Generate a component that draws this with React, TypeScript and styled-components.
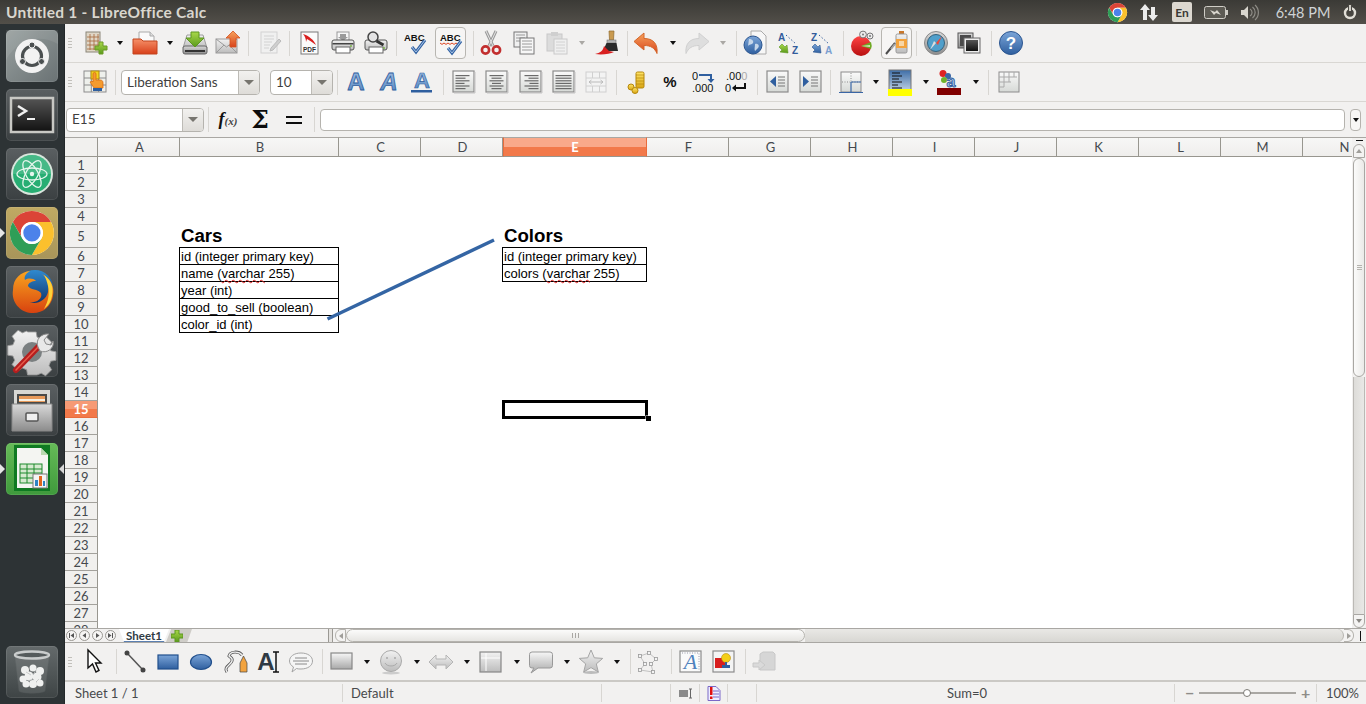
import React, { ReactNode } from "react";
import styled, { createGlobalStyle } from "styled-components";

const UI = `Lato, "Noto Sans", sans-serif`;

const Global = createGlobalStyle`
  html, body { margin: 0; padding: 0; background: #f2f1f0; overflow: hidden; }
  * { box-sizing: border-box; }
`;

const Page = styled.div`
  width: 1366px; height: 704px; display: flex; flex-direction: column; overflow: hidden;
  font-family: ${UI}; color: #3c3c3c; position: relative;
`;
const DefsSvg = styled.svg`position: absolute; width: 0; height: 0;`;

/* ---------- top panel ---------- */
const TopPanel = styled.header`
  height: 24px; flex: none; display: flex; align-items: center;
  background: linear-gradient(#3b3a36, #524f49); color: #d8d5cd;
`;
const WinTitle = styled.div`
  margin-left: 6px; font: bold 15.5px ${UI}; letter-spacing: 0.25px; white-space: nowrap; color: #d9d6ce;
`;
const Tray = styled.div`margin-left: auto; display: flex; align-items: center; height: 24px;`;
const TraySlot = styled.div<{ $w: number; $gap: number }>`
  width: ${p => p.$w}px; margin-left: ${p => p.$gap}px; flex: none;
  display: flex; align-items: center; justify-content: center;
`;
const LangBadge = styled.div`
  width: 20px; height: 20px; border-radius: 2px; background: #dcd8d0; color: #3a3935;
  font: bold 12px ${UI}; display: flex; align-items: center; justify-content: center;
`;
const Clock = styled.div`font-size: 14.5px; color: #cfd3d6; white-space: nowrap;`;

/* ---------- launcher ---------- */
const Body = styled.div`flex: 1; display: flex; min-height: 0;`;
const Launcher = styled.nav`
  width: 65px; flex: none; background: #2d3335; display: flex; flex-direction: column;
  align-items: center; gap: 7px; padding: 6px 1px 6px 0; border-right: 1px solid #23282a;
`;
const Tile = styled.div<{ $bg: string; $last?: boolean }>`
  width: 52px; height: 52px; border-radius: 5px; background: ${p => p.$bg}; position: relative; flex: none;
  margin-top: ${p => (p.$last ? "auto" : "0")};
  box-shadow: inset 0 0 0 1px rgba(255,255,255,.09);
  svg { display: block; }
`;
const PipLeft = styled.span`
  position: absolute; left: -6px; top: 21px; width: 0; height: 0;
  border-left: 5px solid #e6e6e6; border-top: 5px solid transparent; border-bottom: 5px solid transparent;
`;
const PipRight = styled.span`
  position: absolute; right: -6px; top: 21px; width: 0; height: 0;
  border-right: 5px solid #d8d8d8; border-top: 5px solid transparent; border-bottom: 5px solid transparent;
`;

/* ---------- toolbars ---------- */
const Main = styled.main`flex: 1; min-width: 0; display: flex; flex-direction: column; background: #f2f1f0;`;
const Toolbar = styled.div<{ $h: number; $line?: boolean }>`
  height: ${p => p.$h}px; flex: none; display: flex; align-items: center;
  border-bottom: ${p => (p.$line ? "1px solid #d9d7d3" : "0")};
`;
const Slot = styled.div<{ $gap: number; $w: number; $on?: boolean }>`
  margin-left: ${p => p.$gap}px; width: ${p => p.$w}px; flex: none; position: relative;
  display: flex; align-items: center; justify-content: center;
  svg { overflow: visible; display: block; }
`;
const Toggled = styled.div`
  width: 31px; height: 32px; border: 1px solid #b8b6b1; border-radius: 4px; background: #f6f5f4;
  display: flex; align-items: center; justify-content: center; flex: none;
`;
const Sep = styled.div`width: 1px; height: 25px; background: #d8d6d2;`;
const Grip = styled.div`
  width: 4px; height: 10px;
  background: repeating-linear-gradient(#c2c0bb 0 1px, transparent 1px 3px);
`;
const Drop = styled.div<{ $off?: boolean }>`
  width: 0; height: 0; border-left: 3.5px solid transparent; border-right: 3.5px solid transparent;
  border-top: 4px solid ${p => (p.$off ? "#aaa8a4" : "#111")};
`;
const Combo = styled.div<{ $h: number }>`
  width: 100%; height: ${p => p.$h}px; display: flex; background: #fff; border: 1px solid #b5b3ae; border-radius: 4px;
  overflow: hidden;
`;
const ComboText = styled.div`
  flex: 1; padding: 1px 0 0 5px; font-size: 13.5px; line-height: 1; display: flex; align-items: center; color: #3f3f3f; white-space: nowrap;
`;
const ComboBtn = styled.div<{ $w: number }>`
  width: ${p => p.$w}px; flex: none; border-left: 1px solid #bdbbb6;
  background: linear-gradient(#f2f1ef, #dedcd8); display: flex; align-items: center; justify-content: center;
  span { width: 0; height: 0; border-left: 5px solid transparent; border-right: 5px solid transparent; border-top: 5px solid #77756f; }
`;
const FormulaInput = styled.div`
  width: 100%; height: 22px; background: #fff; border: 1px solid #b5b3ae; border-radius: 4px;
`;
const FormulaDrop = styled.div`
  width: 11px; height: 22px; border: 1px solid #b5b3ae; border-radius: 4px; background: #f8f7f6;
  display: flex; align-items: center; justify-content: center;
`;
const FxGlyph = styled.div`
  font: italic bold 18px "Liberation Serif", serif; color: #111; white-space: nowrap;
  small { font-size: 11px; color: #444; }
`;
const SigmaGlyph = styled.div`font: bold 25px "DejaVu Serif", serif; color: #0c0c0c; line-height: 1;`;
const EqualGlyph = styled.div`
  width: 16px; height: 8px; border-top: 2.5px solid #0c0c0c; border-bottom: 2.5px solid #0c0c0c;
`;

/* ---------- sheet ---------- */
const SheetArea = styled.section`flex: 1; min-height: 0; display: flex; position: relative; background: #fff;`;
const GridView = styled.div`width: 1287px; flex: none; overflow: hidden;`;
const COLS = [82, 159, 82, 82, 144, 82, 82, 82, 82, 82, 82, 82, 82, 82];
const ROWH = Array.from({ length: 28 }, (_, i) => (i === 4 ? 23 : 17));
const Grid = styled.div`
  display: grid;
  grid-template-columns: 33px ${COLS.map(c => c + "px").join(" ")};
  grid-template-rows: 20px ${ROWH.map(c => c + "px").join(" ")};
  width: ${33 + COLS.reduce((a, b) => a + b, 0)}px;
`;
const Corner = styled.div`
  background: #f1f0ee; border-top: 1px solid #a9a7a3; border-bottom: 1px solid #98968f; border-right: 1px solid #98968f;
`;
const ColHead = styled.div<{ $sel?: boolean }>`
  border-top: 1px solid #a9a7a3; border-bottom: 1px solid #98968f; border-right: 1px solid ${p => (p.$sel ? "#e96c3c" : "#98968f")};
  border-left: ${p => (p.$sel ? "1px solid #e96c3c" : "0")};
  padding-left: ${p => (p.$sel ? 0 : 2)}px;
  background: ${p => p.$sel ? "linear-gradient(#f9a98a 0 9px, #f2794a 9px)" : "linear-gradient(#f7f7f6, #efeeec)"};
  color: ${p => (p.$sel ? "#fff" : "#45494e")}; font-weight: ${p => (p.$sel ? 700 : 400)};
  font-size: 13px; display: flex; align-items: center; justify-content: center;
`;
const RowHead = styled.div<{ $sel?: boolean }>`
  border-bottom: 1px solid ${p => (p.$sel ? "#e96c3c" : "#a3a19c")}; border-right: 1px solid #98968f;
  background: ${p => p.$sel ? "linear-gradient(#f69a75 0 8px, #f2794a 8px)" : "#f1f0ee"};
  color: ${p => (p.$sel ? "#fff" : "#45494e")}; font-weight: ${p => (p.$sel ? 700 : 400)};
  font-size: 13px; display: flex; align-items: center; justify-content: center;
`;
const Cell = styled.div<{ $table?: boolean; $first?: boolean; $sel?: boolean; $title?: boolean }>`
  font: ${p => (p.$title ? "bold 18.67px" : "13px")} "Liberation Sans", sans-serif;
  color: #000; padding-left: 1px; white-space: nowrap; position: relative;
  display: flex; align-items: flex-end; line-height: ${p => (p.$title ? "22px" : "16px")};
  padding-bottom: ${p => (p.$title ? 1 : 0)}px;
  box-shadow: ${p => {
    if (p.$sel) return "inset 0 0 0 2px #000, 0 0 0 1px #000";
    if (p.$table) {
      const s = ["inset 0 -1px 0 #000", "inset -1px 0 0 #000", "-1px 0 0 #000"];
      if (p.$first) s.push("0 -1px 0 #000", "-1px -1px 0 #000");
      return s.join(",");
    }
    return "none";
  }};
  u { text-decoration: underline wavy #d22 1px; text-underline-offset: 1px; text-decoration-skip-ink: none; }
`;
const FillHandle = styled.span`
  position: absolute; right: -4px; bottom: -3px; width: 5px; height: 5px; background: #000; box-shadow: 0 0 0 0.5px #fff;
`;
const LinkLine = styled.svg`position: absolute; left: 0; top: 0; width: 1301px; height: 491px; pointer-events: none;`;

const VScroll = styled.div`
  width: 14px; flex: none; background: #f2f1f0; display: flex; flex-direction: column; align-items: center;
  border-top: 1px solid #a9a7a3; position: relative;
`;
const SplitDash = styled.div`width: 7px; height: 1px; background: #111; margin: 2px 0 3px;`;
const VBtn = styled.div`
  width: 12px; height: 14px; flex: none; background: #f4f3f2; border: 1px solid #a9a7a3; border-radius: 6px 6px 0 0;
  display: flex; align-items: center; justify-content: center;
  span { width: 0; height: 0; border-left: 3px solid transparent; border-right: 3px solid transparent; border-bottom: 4px solid #a09e9a; }
`;
const VThumb = styled.div`
  width: 12px; height: 219px; flex: none; background: linear-gradient(90deg, #fbfbfa, #ebeae8);
  border: 1px solid #a9a7a3; border-radius: 6px;
  display: flex; align-items: center; justify-content: center;
`;
const VTrack = styled.div`flex: 1; width: 12px; background: linear-gradient(90deg,#dddcd9,#e9e8e6); border-left: 1px solid #bbb9b5; border-right: 1px solid #bbb9b5;`;
const VBtnDown = styled(VBtn)`
  border-radius: 0 0 6px 6px;
  span { border-bottom: 0; border-top: 4px solid #8a8884; }
`;
const GripLines = styled.div`
  width: 5px; height: 5px; background: repeating-linear-gradient(#b5b3ae 0 1px, transparent 1px 2px);
`;

/* ---------- tab bar ---------- */
const TabBar = styled.div`
  height: 15px; flex: none; display: flex; align-items: stretch; background: #f2f1f0;
  border-top: 1px solid #a9a7a3; border-bottom: 1px solid #a9a7a3; position: relative;
`;
const NavGroup = styled.div`display: flex; align-items: center; gap: 2px; padding-left: 1px; margin-right: 1px; width: 53px;`;
const NavBtn = styled.div`
  width: 11px; height: 11px; border-radius: 50%; border: 1px solid #9a9893; background: #f6f5f4; flex: none;
  display: flex; align-items: center; justify-content: center; font-size: 0;
  svg { display: block; }
`;
const SheetTab = styled.div`
  width: 50px; font: bold 11.5px ${UI}; color: #2f3a44; display: flex; align-items: center; justify-content: center;
  background: #fff; clip-path: polygon(0 0, 100% 0, 90% 100%, 10% 100%);
  border-bottom: 1px solid #5b7fb0; margin-left: 0;
`;
const AddTab = styled.div`
  width: 26px; margin-left: -3px; padding-right: 4px; background: #cfcdc8; clip-path: polygon(20% 0, 100% 0, 82% 100%, 0 100%);
  display: flex; align-items: center; justify-content: center;
`;
const TabFill = styled.div`width: 137px; background: #f2f1f0; border-right: 1px solid #9a9893;`;
const TabSplit = styled.div`width: 4px; background: #e4e2df; border-right: 1px solid #9a9893;`;
const HScroll = styled.div`flex: 1; display: flex; align-items: stretch; min-width: 0;`;
const HBtn = styled.div`
  width: 11px; margin-left: 2px; flex: none; border: 1px solid #b5b3ae; border-radius: 6px 0 0 6px; background: #f4f3f2;
  display: flex; align-items: center; justify-content: center;
  span { width: 0; height: 0; border-top: 3px solid transparent; border-bottom: 3px solid transparent; border-right: 4px solid #a09e9a; }
`;
const HThumb = styled.div`
  width: 459px; flex: none; border: 1px solid #b5b3ae; border-radius: 7px;
  background: linear-gradient(#fbfbfa, #e6e5e2); display: flex; align-items: center; justify-content: center;
`;
const HGrip = styled.div`
  width: 7px; height: 5px; background: repeating-linear-gradient(90deg, #a9a7a3 0 1px, transparent 1px 3px);
`;
const HTrack = styled.div`
  flex: 1; background: linear-gradient(#e9e8e5, #d8d7d3); border-radius: 0 7px 7px 0; border-right: 1px solid #b5b3ae;
`;
const HBtnRight = styled(HBtn)`
  margin-left: 0; width: 10px; border-radius: 0 6px 6px 0; border-left: 0;
  span { border-right: 0; border-left: 4px solid #a09e9a; }
`;
const HEnd = styled.div`
  width: 12px; flex: none; display: flex; justify-content: center;
  span { width: 1px; height: 10px; margin-top: 2px; background: #111; }
`;

/* ---------- status ---------- */
const DrawBar = styled(Toolbar)`border-bottom: 2px solid #cbc9c5;`;
const StatusBar = styled.footer`height: 22px; flex: none; display: flex; align-items: center; font-size: 13px; color: #47494b;`;
const StatusCell = styled.div<{ $w?: number; $center?: boolean; $edge?: boolean; $pad?: number }>`
  width: ${p => (p.$w ? `${p.$w}px` : "auto")}; flex: ${p => (p.$w ? "none" : 1)}; height: 18px;
  display: flex; align-items: center; white-space: nowrap;
  justify-content: ${p => (p.$center ? "center" : "flex-start")};
  padding-left: ${p => p.$pad ?? 0}px;
  border-right: ${p => (p.$edge ? "1px solid #d8d6d2" : "0")};
`;
const ZoomPart = styled.div`display: flex; align-items: center; padding-left: 10px; gap: 5px;`;
const ZoomSign = styled.div`font-weight: 700; font-size: 16px; line-height: 16px; width: 9px; text-align: center; color: #8e8c88;`;
const ZoomTrack = styled.div`
  width: 97px; height: 2px; background: #a9a7a3; position: relative;
`;
const ZoomKnob = styled.div`
  position: absolute; left: 44px; top: -3px; width: 8px; height: 8px; border-radius: 50%;
  background: #fff; border: 1px solid #7d7b77;
`;

/* ---------- svg art ---------- */
const T = (p: any) => <text fontFamily="Liberation Sans, sans-serif" {...p} />;

const Defs = () => (
  <DefsSvg aria-hidden="true">
    <defs>
      {[
        ["gBlue", "#7ba5d8", "#2f5f9f"], ["gBlueL", "#a8c4e6", "#4f81bd"], ["gGray", "#f7f7f7", "#a8a8a8"],
        ["gFrame", "#fafafa", "#d6d9d6"], ["gOrange", "#f7a35c", "#d8431c"], ["gFolder", "#f6916a", "#d8401a"],
        ["gRed", "#f44", "#b81010"], ["gGreen", "#a9d84a", "#5a9a1c"], ["gYellow", "#ffe566", "#d9a514"],
        ["gDark", "#555", "#111"], ["gShade", "#f2f2f2", "#bcbcbc"], ["gDisabled", "#f2f2f2", "#d2d2d2"],
        ["gMetal", "#d9d9d9", "#8c8c8c"], ["gSheen", "#3e6ea8", "#b9cce0"], ["gFox", "#f9a51f", "#d8420f"], ["gGlobe", "#2f8ad0", "#0e2f66"],
      ].map(([id, a, b]) => (
        <linearGradient id={id} key={id} x1="0" y1="0" x2="0" y2="1">
          <stop offset="0" stopColor={a} /><stop offset="1" stopColor={b} />
        </linearGradient>
      ))}
    </defs>
  </DefsSvg>
);

const chrome = (
  <>
    <circle cx="24" cy="24" r="22" fill="#fff" />
    <path d="M4.95 13A22 22 0 0 1 43.05 13H24A11 11 0 0 0 14.47 29.5Z" fill="#db4437" />
    <path d="M43.05 13A22 22 0 0 1 24 46L33.53 29.5A11 11 0 0 0 24 13Z" fill="#fbc02d" />
    <path d="M24 46A22 22 0 0 1 4.95 13L14.47 29.5A11 11 0 0 0 33.53 29.5Z" fill="#2f9e57" />
    <circle cx="24" cy="24" r="11" fill="#fff" />
    <circle cx="24" cy="24" r="8.6" fill="#4c82ea" />
  </>
);

const Align = ({ k }: { k: string }) => {
  const w = [14, 10, 14, 9, 14, 10];
  return (
    <>
      <rect x="1" y="1" width="21" height="21" fill="url(#gFrame)" stroke="#8c8c8c" strokeWidth="1.2" />
      <path d="M2 23h21V2" stroke="#c4c4c4" fill="none" />
      {w.map((v, i) => {
        const len = k === "j" ? 16 : v;
        const x = k === "r" ? 19.5 - len : k === "c" ? 11.5 - len / 2 : 3.5;
        return <rect key={i} x={x} y={5 + i * 2.6} width={len} height="1.2" fill="#6a6a6a" />;
      })}
    </>
  );
};
const Indent = ({ right }: { right?: boolean }) => (
  <>
    <rect x="1" y="1" width="21" height="21" fill="url(#gFrame)" stroke="#8c8c8c" strokeWidth="1.2" />
    <path d={right ? "M4 6l6 5.5-6 5.5z" : "M10 6l-6 5.5 6 5.5z"} fill="#2f5f9f" />
    <path d="M12 7h7M12 10h7M12 13h7M12 16h7" stroke="#777" />
  </>
);

const icons: Record<string, ReactNode> = {
  new: <>
    <rect x="3" y="1" width="14" height="20" fill="#dfd6c6" stroke="#8a8678" />
    <path d="M7 3v16M11 3v16M15 3v16M4 6h12M4 10h12M4 14h12M4 18h12" stroke="#a5673a" strokeWidth=".8" />
    <path d="M16 11h4v4h4v4h-4v4h-4v-4h-4v-4h4z" fill="url(#gGreen)" stroke="#6b9a24" />
  </>,
  open: <>
    <path d="M6 1h11l4 4v9H6z" fill="#fafafa" stroke="#aaa" />
    <path d="M17 1v4h4" fill="#ddd" stroke="#aaa" />
    <path d="M0 8h8l2 2h14v13H0z" fill="url(#gFolder)" stroke="#c2441e" />
  </>,
  save: <>
    <path d="M4 4h16l4 13H0z" fill="url(#gShade)" stroke="#9c9c9c" />
    <rect x="0" y="15" width="24" height="8" rx="2" fill="url(#gMetal)" stroke="#666" />
    <rect x="2" y="19" width="20" height="2" fill="#333" />
    <path d="M8 1h8v6h5l-9 9-9-9h5z" fill="url(#gGreen)" stroke="#5c9620" />
  </>,
  mail: <>
    <rect x="0" y="8" width="21" height="14" fill="url(#gShade)" stroke="#9a9a9a" />
    <path d="M0 8l10.5 8L21 8M0 22l8-8M21 22l-8-8" stroke="#9a9a9a" fill="none" />
    <path d="M17 0l7 7h-4v9h-6V7h-4z" fill="url(#gOrange)" stroke="#d4501f" strokeWidth=".8" />
  </>,
  edit: <>
    <rect x="4" y="1" width="16" height="21" fill="#f0f0f0" stroke="#d2d2d2" />
    <path d="M7 5h10M7 8h10M7 11h8M7 14h6M7 17h5" stroke="#d2d2d2" />
    <path d="M22 8l2 2-8 9-3 1 1-3z" fill="#cfcfcf" stroke="#bbb" />
  </>,
  pdf: <>
    <rect x="3" y="1" width="17" height="22" fill="#fbfbfb" stroke="#7a7a7a" />
    <path d="M5 3C11 5 16 9 18 14 14 11 11 9 9 8L8 11C8 8 7 5 5 3z" fill="#d81e1e" />
    <T x="11.5" y="21" fontSize="6.5" fontWeight="bold" textAnchor="middle" fill="#333">PDF</T>
  </>,
  print: <>
    <rect x="6" y="1" width="12" height="10" fill="#f6f6f6" stroke="#999" />
    <path d="M9 3h6v3h2l-5 4-5-4h2z" fill="#9a9a9a" />
    <rect x="1" y="9" width="22" height="10" rx="2" fill="url(#gShade)" stroke="#555" />
    <rect x="5" y="16" width="14" height="6" fill="#fff" stroke="#666" />
    <rect x="1.5" y="12" width="21" height="1.5" fill="#444" />
    <circle cx="20" cy="15" r="1" fill="#7ab648" />
  </>,
  preview: <>
    <rect x="1" y="9" width="22" height="10" rx="2" fill="url(#gShade)" stroke="#555" />
    <rect x="5" y="16" width="14" height="6" fill="#fff" stroke="#666" />
    <circle cx="20" cy="17" r="1" fill="#7ab648" />
    <circle cx="9" cy="6" r="5" fill="#e4e4e4" stroke="#444" strokeWidth="1.5" />
    <path d="M12.5 10l7 4" stroke="#333" strokeWidth="3" />
  </>,
  spell: <>
    <T x="1" y="10" fontSize="9.5" fontWeight="bold" fill="#111">ABC</T>
    <path d="M9 16l4 5 9-12" fill="none" stroke="#3565a5" strokeWidth="3" />
    <path d="M9 16l4 5 9-12" fill="none" stroke="#a9c4e6" strokeWidth="1" />
  </>,
  autospell: <>
    <T x="1" y="10" fontSize="9.5" fontWeight="bold" fill="#111">ABC</T>
    <path d="M1 12l2 1.4 2-1.4 2 1.4 2-1.4 2 1.4 2-1.4 2 1.4 2-1.4 2 1.4" fill="none" stroke="#d42" />
    <path d="M9 17l4 5 9-12" fill="none" stroke="#3565a5" strokeWidth="3" />
    <path d="M9 17l4 5 9-12" fill="none" stroke="#a9c4e6" strokeWidth="1" />
  </>,
  cut: <>
    <path d="M7 0l7 15M17 0L10 15" stroke="#9a9a9a" strokeWidth="3" fill="none" />
    <path d="M7 0l7 15M17 0L10 15" stroke="#e4e4e4" strokeWidth="1" fill="none" />
    <circle cx="6.5" cy="19" r="3.6" fill="none" stroke="#c22f2f" strokeWidth="2.6" />
    <circle cx="17.5" cy="19" r="3.6" fill="none" stroke="#c22f2f" strokeWidth="2.6" />
  </>,
  copy: <>
    <rect x="2" y="1" width="13" height="15" fill="#f0f0f0" stroke="#777" />
    <path d="M4 4h9M4 7h9M4 10h9" stroke="#999" />
    <rect x="8" y="7" width="14" height="16" fill="#f7f7f7" stroke="#777" />
    <path d="M10 10h10M10 13h10M10 16h10M10 19h10" stroke="#9a9a9a" />
  </>,
  paste: <>
    <rect x="2" y="3" width="15" height="17" fill="#dcdcdc" stroke="#c8c8c8" />
    <rect x="6" y="1" width="7" height="4" fill="#cfcfcf" />
    <rect x="9" y="8" width="13" height="15" fill="#efefef" stroke="#cacaca" />
    <path d="M11 11h9M11 14h9M11 17h9M11 20h9" stroke="#d2d2d2" />
  </>,
  brush: <>
    <path d="M14 0h5l-.5 9h-4z" fill="#c99a50" stroke="#8f6a2e" strokeWidth=".7" />
    <rect x="12" y="9" width="9" height="3" fill="#b5b5b5" stroke="#777" strokeWidth=".6" />
    <path d="M11.5 12h10l1.5 8H8z" fill="#2a2a2a" />
    <path d="M0 23C5 22 8 20 9 15l5 5 5 1c-4 2-12 3-19 2z" fill="#d82020" />
  </>,
  undo: <>
    <path d="M0 10.5L10 2v5.5c9 0 14 5 13 15-2.500-5.500-6-8-13-8V19z" fill="url(#gOrange)" stroke="#d3672a" />
  </>,
  redo: <>
    <path d="M24 10.5L14 2v5.5c-9 0-14 5-13 15 2.500-5.500 6-8 13-8V19z" fill="#dedede" stroke="#d0d0d0" />
  </>,
  link: <>
    <path d="M8 0h10l5 5v18H8z" fill="#f7f7f7" stroke="#aaa" />
    <circle cx="10" cy="14" r="9" fill="url(#gBlue)" stroke="#2c5690" />
    <path d="M6 8c3 0 5 2 4 4s-4 1-5 3M12 13c3-1 5 2 3 4l-3 3c-1-2 0-4 0-7z" fill="#c6d7ea" />
  </>,
  az: <>
    <T x="1" y="10" fontSize="10" fontWeight="bold" fill="#335c9c">A</T>
    <T x="15" y="23" fontSize="10" fontWeight="bold" fill="#335c9c">Z</T>
    <path d="M9 4l10 9" stroke="#335c9c" strokeDasharray="1.500 2" />
    <path d="M2 13l3 3 2-2 1 8-8-1 2-2-3-3z" transform="translate(3 0)" fill="url(#gGreen)" stroke="#5c9620" strokeWidth=".6" />
  </>,
  za: <>
    <T x="1" y="10" fontSize="10" fontWeight="bold" fill="#335c9c">Z</T>
    <T x="15" y="23" fontSize="10" fontWeight="bold" fill="#7a9fd0">A</T>
    <path d="M9 4l10 9" stroke="#335c9c" strokeDasharray="1.500 2" />
    <path d="M2 13l3 3 2-2 1 8-8-1 2-2-3-3z" transform="translate(3 0)" fill="url(#gBlue)" stroke="#2c5690" strokeWidth=".6" />
  </>,
  chart: <>
    <circle cx="11" cy="15" r="10" fill="url(#gRed)" />
    <path d="M11 15l10-4a10 10 0 0 1 0 7z" fill="#6ea922" />
    <path d="M11 15l9-1v2z" fill="#fff" opacity=".7" />
    <circle cx="13" cy="3.500" r="3.400" fill="#ececec" stroke="#777" />
    <circle cx="20" cy="5" r="3" fill="#ececec" stroke="#777" />
    <circle cx="13" cy="3.500" r="1" fill="#777" /><circle cx="20" cy="5" r="1" fill="#777" />
  </>,
  draw: <>
    <path d="M14 0h5v3h-5z" fill="#c9772a" />
    <rect x="11" y="3" width="11" height="19" rx="1.500" fill="url(#gShade)" stroke="#999" />
    <rect x="11" y="8" width="11" height="9" fill="#f2a33f" />
    <rect x="14" y="10" width="5" height="5" fill="#f8d7a8" />
    <path d="M1 23l9-11" stroke="#4c4c4c" strokeWidth="2" />
    <path d="M6 18l4-5" stroke="#a5a5a5" strokeWidth="2" />
  </>,
  nav: <>
    <circle cx="12" cy="12" r="11.500" fill="url(#gMetal)" stroke="#8a8a8a" />
    <circle cx="12" cy="12" r="8.500" fill="#4f9fcb" stroke="#35627c" />
    <path d="M18 5l-4 9-2-2z" fill="#e8483a" /><path d="M6 19l4-9 2 2z" fill="#ddd" />
  </>,
  win: <>
    <rect x="1" y="2" width="15" height="15" fill="url(#gMetal)" stroke="#555" />
    <rect x="3" y="4" width="11" height="11" fill="#4a4a4a" />
    <rect x="7" y="7" width="16" height="15" fill="#ededed" stroke="#666" />
    <rect x="9" y="9" width="12" height="11" fill="url(#gDark)" />
  </>,
  help: <>
    <circle cx="12" cy="12" r="11.500" fill="url(#gBlue)" stroke="#2c5690" />
    <T x="12" y="18" fontSize="17" fontWeight="bold" textAnchor="middle" fill="#fff">?</T>
  </>,
  cellstyle: <>
    <rect x="1" y="1" width="22" height="21" fill="#eef0ec" stroke="#8c8c8c" />
    <path d="M8.300 1v21M15.600 1v21M1 8h22M1 15h22" stroke="#8c8c8c" />
    <rect x="8" y="1" width="8" height="8" fill="#f2d31d" stroke="#b28a10" />
    <path d="M10 4a1.500 1.500 0 0 1 3 0v6h4c2 0 3 1 3 3v5H11l-4-6 2-1 1 1z" fill="#f49b2f" stroke="#d96d12" strokeWidth=".8" />
    <rect x="10" y="18" width="9" height="3" fill="#2f5f9f" />
  </>,
  bold: <T x="12" y="20" fontSize="24" fontWeight="bold" textAnchor="middle" fill="url(#gBlueL)" stroke="#2f5f9f" strokeWidth=".8">A</T>,
  italic: <T x="12" y="20" fontSize="24" fontWeight="bold" fontStyle="italic" textAnchor="middle" fill="url(#gBlueL)" stroke="#2f5f9f" strokeWidth=".8">A</T>,
  under: <>
    <T x="12" y="18" fontSize="22" textAnchor="middle" fontWeight="bold" fill="url(#gBlueL)" stroke="#2f5f9f" strokeWidth=".7">A</T>
    <rect x="1" y="20" width="21" height="2.500" fill="#2f5f9f" />
  </>,
  al: <Align k="l" />, ac: <Align k="c" />, ar: <Align k="r" />, aj: <Align k="j" />,
  merge: <>
    <rect x="2" y="2" width="20" height="20" fill="#f3f3f3" stroke="#d0d0d0" />
    <path d="M2 8h20M2 16h20M8.500 2v6M15.500 2v6M8.500 16v6M15.500 16v6" stroke="#d0d0d0" />
    <path d="M5 12h14M5 12l2.500-2M5 12l2.500 2M19 12l-2.500-2M19 12l-2.500 2" stroke="#bbb" fill="none" />
  </>,
  coins: <>
    <rect x="11" y="2" width="8" height="16" rx="1.500" fill="url(#gYellow)" stroke="#b5870c" />
    <path d="M11 5h8M11 8h8M11 11h8M11 14h8" stroke="#b5870c" strokeWidth=".7" />
    <circle cx="6" cy="17" r="3" fill="url(#gYellow)" stroke="#b5870c" />
    <circle cx="10" cy="20.500" r="3" fill="url(#gYellow)" stroke="#b5870c" />
  </>,
  pct: <T x="12" y="17" fontSize="15" fontWeight="bold" textAnchor="middle" fill="#111">%</T>,
  decadd: <>
    <T x="1" y="10" fontSize="11" fill="#111">0</T>
    <T x="1" y="22" fontSize="11" fill="#111">.000</T>
    <path d="M8 5h12v6" fill="none" stroke="#2f5f9f" strokeWidth="2" />
    <path d="M16.500 9h7L20 13z" fill="#2f5f9f" />
  </>,
  decdel: <>
    <T x="2" y="10" fontSize="11" fill="#111">.00<tspan fill="#aaa">0</tspan></T>
    <T x="1" y="22" fontSize="11" fill="#111">0</T>
    <path d="M21 13v5H10" fill="none" stroke="#111" strokeWidth="2" />
    <path d="M12 14.500v7L8 18z" fill="#111" />
  </>,
  indl: <Indent />, indr: <Indent right />,
  borders: <>
    <rect x="2" y="2" width="20" height="20" fill="url(#gFrame)" stroke="#8c8c8c" />
    <path d="M12 3v8M3 12h18" stroke="#8c8c8c" strokeDasharray="1 1.500" />
    <path d="M12 12v10M12 12h10M0 22.500h24" stroke="#3a66a5" strokeWidth="1.200" />
  </>,
  bg: <>
    <rect x="1" y="0" width="22" height="20" fill="url(#gSheen)" stroke="#777" />
    <path d="M4 3h8M4 6h10M4 9h7M4 12h10M4 15h6M4 18h10" stroke="#111" />
    <rect x="0" y="19" width="24" height="7" fill="#ffff00" />
  </>,
  fc: <>
    <circle cx="6" cy="3.500" r="3.500" fill="#d22" /><circle cx="11" cy="6" r="3" fill="#3a66a5" />
    <circle cx="7" cy="10" r="3" fill="#6fb22a" />
    <T x="14" y="17" fontSize="16" fontWeight="bold" textAnchor="middle" fill="#a9c4e6" stroke="#2f5f9f" strokeWidth=".9">a</T>
    <rect x="0" y="18" width="24" height="7" fill="#800000" />
  </>,
  gridbox: <>
    <rect x="2" y="2" width="20" height="20" fill="url(#gFrame)" stroke="#8c8c8c" />
    <path d="M2 7h18M2 12h12M2 17h5M7 2v15M12 2v10M17 2v5" stroke="#aaa" />
  </>,
  pointer: <path d="M4 0v18l4.500-4 3.500 8 3-1.500-3.500-7.500H17z" fill="#fff" stroke="#111" strokeWidth="1.400" />,
  line: <>
    <path d="M4 3l16 17" stroke="#555" strokeWidth="1.500" />
    <circle cx="4" cy="3" r="2.500" fill="#444" /><circle cx="20" cy="20" r="2.500" fill="#444" />
  </>,
  rect: <rect x="2" y="5" width="20" height="14" fill="url(#gBlue)" stroke="#214f8c" strokeWidth="1.200" />,
  ellipse: <ellipse cx="12" cy="12" rx="10.500" ry="7.500" fill="url(#gBlue)" stroke="#214f8c" strokeWidth="1.200" />,
  free: <>
    <path d="M4 22C0 17 8 15 9 11 10 8 8 8 6 6 7 1 16 1 19 5" fill="none" stroke="#555" strokeWidth="3" />
    <path d="M4 22C0 17 8 15 9 11 10 8 8 8 6 6 7 1 16 1 19 5" fill="none" stroke="#eee" strokeWidth="1.400" />
    <path d="M17 13l3.500-7 3.500 7v9h-7z" fill="#f2a33f" stroke="#444" strokeWidth=".7" />
  </>,
  textbox: <>
    <T x="10" y="20" fontSize="24" fontWeight="bold" textAnchor="middle" fill="#2f3a44">A</T>
    <path d="M17 2h6M17 22h6M20 2v20" stroke="#111" strokeWidth="1.500" />
  </>,
  callout: <>
    <path d="M12 3c7 0 11.500 3.500 11.500 8s-4.500 8-11.500 8c-1.500 0-3 0-4.500-.5L3 22l1.500-5C2 15.500.5 13.500.5 11 .5 6.500 5 3 12 3z" fill="#f5f5f5" stroke="#a5a5a5" />
    <path d="M6 8h12M4 11h16M6 14h12" stroke="#8a8a8a" />
  </>,
  basic: <rect x="1" y="3" width="21" height="16" fill="url(#gGray)" stroke="#888" strokeWidth="1.200" />,
  smile: <>
    <ellipse cx="12" cy="23" rx="9" ry="1.500" fill="#ccc" />
    <circle cx="12" cy="11" r="10.500" fill="url(#gShade)" stroke="#aaa" />
    <circle cx="8" cy="8" r="1" fill="#aaa" /><circle cx="16" cy="8" r="1" fill="#aaa" />
    <path d="M6 13c2 4 10 4 12 0" stroke="#aaa" fill="none" />
  </>,
  arrows: <path d="M0 12l7-7v4h10V5l7 7-7 7v-4H7v4z" fill="url(#gShade)" stroke="#b5b5b5" />,
  flow: <>
    <rect x="1" y="2" width="21" height="20" fill="url(#gShade)" stroke="#888" strokeWidth="1.200" />
    <path d="M7 3v18M2 8h19" stroke="#fff" />
  </>,
  bubble: <path d="M3 2h18a2.500 2.500 0 0 1 2.500 2.500v11a2.500 2.500 0 0 1-2.500 2.500H9l-7 5 3-5H3A2.500 2.500 0 0 1 .5 15.500v-11A2.500 2.500 0 0 1 3 2z" fill="url(#gGray)" stroke="#999" />,
  star: <>
    <ellipse cx="12" cy="22.500" rx="8" ry="1.500" fill="#bbb" />
    <path d="M12 0l3.300 7.800 8.400.6-6.400 5.500 2 8.100-7.300-4.400L4.700 22l2-8.100L.3 8.400l8.400-.6z" fill="url(#gShade)" stroke="#a5a5a5" />
  </>,
  points: <>
    <path d="M3 6l9-3 7 6-5 5 2 8-13-2 5-6z" fill="none" stroke="#c2c2c2" />
    {[[3, 6], [12, 3], [19, 9], [14, 14], [16, 22], [3, 20], [8, 14]].map(([x, y], i) => (
      <rect key={i} x={x - 1.5} y={y - 1.5} width="3" height="3" fill="#f4f4f4" stroke="#999" strokeWidth=".8" />
    ))}
  </>,
  fontwork: <>
    <rect x="1" y="1" width="21" height="21" fill="#fafafa" stroke="#8c8c8c" strokeWidth="1.200" />
    <path d="M3 3h17v17" fill="none" stroke="#99a" strokeDasharray="1 1.500" />
    <text x="11.500" y="19" fontFamily="Liberation Serif, serif" fontStyle="italic" fontSize="22" textAnchor="middle" fill="#4f81bd">A</text>
  </>,
  image: <>
    <rect x="1" y="1" width="21" height="21" fill="#f4f4f4" stroke="#8c8c8c" strokeWidth="1.200" />
    <rect x="3" y="8" width="11" height="10" fill="#d81e1e" />
    <circle cx="14" cy="8" r="4.500" fill="#f4cf19" stroke="#b88f10" strokeWidth=".6" />
    <path d="M13 12h2v3h3v3h-8v-3h3z" fill="#2f5f9f" />
  </>,
  extrude: <>
    <path d="M8 4l3-2h10l2 2v16H8z" fill="#d6d6d6" stroke="#c8c8c8" />
    <path d="M1 13h6v-3l6 5-6 5v-3H1z" fill="#dadada" stroke="#c8c8c8" />
  </>,
};

const Glyph = ({ n, s = 24 }: { n: string; s?: number }) => (
  <svg width={s} height={s} viewBox="0 0 24 24">{icons[n]}</svg>
);

type It = { c: number; w: number; node: ReactNode };
const ic = (n: string, c: number): It => ({ c, w: 24, node: <Glyph n={n} /> });
const on = (n: string, c: number): It => ({ c, w: 31, node: <Toggled><Glyph n={n} /></Toggled> });
const dr = (c: number, off?: boolean): It => ({ c, w: 7, node: <Drop $off={off} /> });
const sp = (c: number): It => ({ c, w: 1, node: <Sep /> });
const gr = (c: number): It => ({ c, w: 4, node: <Grip /> });

const Flow = ({ items }: { items: It[] }) => {
  let x = 65;
  return (
    <>
      {items.map((it, i) => {
        const left = Math.round(it.c - it.w / 2);
        const gap = left - x;
        x = left + it.w;
        return <Slot key={i} $gap={gap} $w={it.w}>{it.node}</Slot>;
      })}
    </>
  );
};

const row1: It[] = [
  gr(70), ic("new", 95), dr(119), ic("open", 145), dr(169), ic("save", 195), ic("mail", 228), sp(248), ic("edit", 269), sp(289),
  ic("pdf", 310), ic("print", 343), ic("preview", 376), sp(396), ic("spell", 415), on("autospell", 450), sp(473),
  ic("cut", 491), ic("copy", 524), ic("paste", 557), dr(581, true), ic("brush", 607), sp(627), ic("undo", 646), dr(672),
  ic("redo", 697), dr(722, true), sp(736), ic("link", 755), ic("az", 789), ic("za", 822), sp(843), ic("chart", 862), on("draw", 896),
  sp(916), ic("nav", 936), ic("win", 969), sp(991), ic("help", 1011),
];
const row2: It[] = [
  gr(70), ic("cellstyle", 95), sp(115),
  { c: 190, w: 139, node: <Combo $h={25}><ComboText>Liberation Sans</ComboText><ComboBtn $w={21}><span /></ComboBtn></Combo> },
  { c: 301, w: 63, node: <Combo $h={25}><ComboText>10</ComboText><ComboBtn $w={21}><span /></ComboBtn></Combo> },
  sp(337), ic("bold", 356), ic("italic", 389), ic("under", 422), sp(443), ic("al", 464), ic("ac", 497), ic("ar", 531), ic("aj", 564),
  ic("merge", 596), sp(616), ic("coins", 637), ic("pct", 670), ic("decadd", 703), ic("decdel", 736), sp(757), ic("indl", 778), ic("indr", 811),
  sp(830), ic("borders", 851), dr(875), ic("bg", 900), dr(925), ic("fc", 949), dr(975), sp(988), ic("gridbox", 1009),
];
const row3: It[] = [
  { c: 135, w: 138, node: <Combo $h={24}><ComboText>E15</ComboText><ComboBtn $w={21}><span /></ComboBtn></Combo> },
  sp(208),
  { c: 228, w: 24, node: <FxGlyph>f<small>(x)</small></FxGlyph> },
  { c: 260, w: 24, node: <SigmaGlyph>Σ</SigmaGlyph> },
  { c: 294, w: 24, node: <EqualGlyph /> },
  sp(314),
  { c: 832.5, w: 1025, node: <FormulaInput /> },
  { c: 1355, w: 11, node: <FormulaDrop><Drop /></FormulaDrop> },
];
const row4: It[] = [
  gr(70), ic("pointer", 96), sp(116), ic("line", 135), ic("rect", 168), ic("ellipse", 201), ic("free", 235), ic("textbox", 268), ic("callout", 301), sp(322),
  ic("basic", 342), dr(366), ic("smile", 391), dr(416), ic("arrows", 441), dr(466), ic("flow", 491), dr(516), ic("bubble", 541), dr(566), ic("star", 591), dr(616),
  sp(630), ic("points", 649), sp(671), ic("fontwork", 691), ic("image", 724), sp(745), ic("extrude", 764),
];

const letters = "ABCDEFGHIJKLMN".split("");
type C = { text?: ReactNode; title?: boolean; table?: boolean; first?: boolean };
const content: Record<string, C> = {
  "B5": { text: "Cars", title: true },
  "E5": { text: "Colors", title: true },
  "B6": { text: "id (integer primary key)", table: true, first: true },
  "B7": { text: <span>name (<u>varchar</u> 255)</span>, table: true },
  "B8": { text: "year (int)", table: true },
  "B9": { text: "good_to_sell (boolean)", table: true },
  "B10": { text: "color_id (int)", table: true },
  "E6": { text: "id (integer primary key)", table: true, first: true },
  "E7": { text: <span>colors (<u>varchar</u> 255)</span>, table: true },
};

const Sheet = () => (
  <Grid>
    <Corner />
    {letters.map(l => <ColHead key={l} $sel={l === "E"}>{l}</ColHead>)}
    {ROWH.map((_, r) => (
      <React.Fragment key={r}>
        <RowHead $sel={r + 1 === 15}>{r + 1}</RowHead>
        {letters.map(l => {
          const id = `${l}${r + 1}`;
          const c = content[id];
          const sel = id === "E15";
          return (
            <Cell key={id} $title={c?.title} $table={c?.table} $first={c?.first} $sel={sel}>
              {c?.text}
              {sel && <FillHandle />}
            </Cell>
          );
        })}
      </React.Fragment>
    ))}
  </Grid>
);

/* launcher art */
const tileArt = (children: ReactNode) => <svg width="52" height="52" viewBox="0 0 52 52">{children}</svg>;
const CHROME_BG = "linear-gradient(#c0aa63,#a8955a)";
const DARK_BG = "linear-gradient(#5a5f61,#3b4042)";

const Nav = ({ d }: { d: string }) => (
  <NavBtn><svg width="7" height="7" viewBox="0 0 7 7"><path d={d} fill="#555" /></svg></NavBtn>
);

export default function App() {
  return (
    <Page>
      <Global />
      <Defs />
      <TopPanel>
        <WinTitle>Untitled 1 - LibreOffice Calc</WinTitle>
        <Tray>
          <TraySlot $w={22} $gap={0}><svg width="21" height="21" viewBox="0 0 48 48">{chrome}</svg></TraySlot>
          <TraySlot $w={20} $gap={11}>
            <svg width="19" height="17" viewBox="0 0 19 17">
              <path d="M5 0l5 6H7v10H3V6H0z" fill="#ececec" /><path d="M13 17l-5-6h3V3h4v8h3z" fill="#ececec" />
            </svg>
          </TraySlot>
          <TraySlot $w={20} $gap={13}><LangBadge>En</LangBadge></TraySlot>
          <TraySlot $w={24} $gap={12}>
            <svg width="24" height="13" viewBox="0 0 24 13">
              <rect x=".5" y=".5" width="21" height="12" rx="2" fill="#5d5b54" stroke="#cfcdc6" />
              <rect x="22" y="4" width="2" height="5" fill="#cfcdc6" />
              <path d="M6 4l5 2 2-2 4 5-5-2-2 2z" fill="#d8d5cd" />
            </svg>
          </TraySlot>
          <TraySlot $w={20} $gap={12}>
            <svg width="20" height="17" viewBox="0 0 20 17">
              <path d="M1 6h3l4-4v13l-4-4H1z" fill="#d8d5cd" />
              <path d="M10 5a4 4 0 0 1 0 7M12.500 3a7 7 0 0 1 0 11M15 1a10 10 0 0 1 0 15" fill="none" stroke="#8f8d87" strokeWidth="1.200" />
            </svg>
          </TraySlot>
          <TraySlot $w={54} $gap={16}><Clock>6:48 PM</Clock></TraySlot>
          <TraySlot $w={16} $gap={12}>
            <svg width="16" height="16" viewBox="0 0 16 16">
              <circle cx="8" cy="9" r="5" fill="none" stroke="#e2dfd7" strokeWidth="2.400" />
              <path d="M8 .5V7" stroke="#4a4843" strokeWidth="4" />
              <path d="M8 1v6" stroke="#e2dfd7" strokeWidth="1.800" />
            </svg>
          </TraySlot>
          <TraySlot $w={8} $gap={0} />
        </Tray>
      </TopPanel>
      <Body>
        <Launcher>
          <Tile $bg="linear-gradient(135deg,#98a09f,#6a7274)">
            {tileArt(<>
              <path d="M0 30C12 8 34 4 52 14V0H0z" fill="#fff" opacity=".08" />
              <circle cx="26" cy="26" r="17" fill="#f2f2f2" />
              <circle cx="26" cy="26" r="9.500" fill="none" stroke="#4a4f50" strokeWidth="3.200" />
              <circle cx="26" cy="26" r="6" fill="#f2f2f2" />
              <circle cx="26" cy="15" r="3" fill="#4a4f50" stroke="#f2f2f2" />
              <circle cx="16.500" cy="31.500" r="3" fill="#4a4f50" stroke="#f2f2f2" />
              <circle cx="35.500" cy="31.500" r="3" fill="#4a4f50" stroke="#f2f2f2" />
            </>)}
          </Tile>
          <Tile $bg={DARK_BG}>
            {tileArt(<>
              <rect x="5" y="9" width="42" height="34" fill="url(#gDark)" stroke="#c8c8c4" strokeWidth="2.500" />
              <path d="M12 17l8 5-8 5" fill="none" stroke="#f0f0f0" strokeWidth="2.500" />
              <rect x="21" y="29" width="8" height="2" fill="#f0f0f0" />
            </>)}
          </Tile>
          <Tile $bg={DARK_BG}>
            {tileArt(<>
              <circle cx="26" cy="26" r="21" fill="#d9e6dd" />
              <circle cx="26" cy="26" r="19" fill="#27ae73" />
              <path d="M7 26a19 19 0 0 1 38 0z" fill="#6cc7a0" opacity=".45" />
              <g fill="none" stroke="#e8f6ee" strokeWidth="1.300">
                <ellipse cx="26" cy="26" rx="15" ry="6" transform="rotate(60 26 26)" />
                <ellipse cx="26" cy="26" rx="15" ry="6" transform="rotate(-60 26 26)" />
                <ellipse cx="26" cy="26" rx="15" ry="6" />
              </g>
              <circle cx="26" cy="26" r="2.200" fill="#e8f6ee" />
            </>)}
          </Tile>
          <Tile $bg={CHROME_BG}>
            <PipLeft />
            {tileArt(<g transform="translate(1.900 1.900)">{chrome}</g>)}
          </Tile>
          <Tile $bg={DARK_BG}>
            {tileArt(<>
              <circle cx="29" cy="22" r="18" fill="url(#gGlobe)" />
              <path d="M7 24C7 12 15 6 24 5 19 8 18 11 19 14 22 12 27 12 30 15 26 15 22 17 22 20 24 24 32 23 35 27 37 33 30 37 24 36 30 39 40 35 42 26 44 17 40 11 36 8 44 12 49 20 47 30 45 41 36 48 25 47 14 46 5 36 7 24Z" fill="url(#gFox)" />
              <path d="M38 9C45 14 48 21 46 30 45 36 42 40 38 43 42 36 44 28 42 20 41 16 40 12 38 9z" fill="#fcd23a" />
            </>)}
          </Tile>
          <Tile $bg={DARK_BG}>
            {tileArt(<>
              <path d="M21 4h10l1 6 5 2 5-3 7 7-3 5 2 5 6 1v10l-6 1-2 5 3 5-7 7-5-3-5 2-1 0H21l-1-6-5-2-5 3-7-7 3-5-2-5-6-1V20l6-1 2-5-3-5 7-7 5 3 5-2z" transform="translate(3.500 3.500) scale(.86)" fill="url(#gShade)" stroke="#999" />
              <circle cx="26" cy="27" r="10" fill="#7a7f80" />
              <path d="M10 45L34 20" stroke="#b51e1e" strokeWidth="6" strokeLinecap="round" />
              <path d="M10 45L34 20" stroke="#e85a4a" strokeWidth="1.500" strokeLinecap="round" />
              <path d="M32 22c-3-7 3-14 11-13l-5 6 2 4 5 1 2-4c2 7-6 13-13 10z" fill="#e8e8e8" stroke="#8a8a8a" />
            </>)}
          </Tile>
          <Tile $bg={DARK_BG}>
            {tileArt(<>
              <rect x="8" y="6" width="36" height="18" fill="#d8d8d4" />
              <rect x="11" y="10" width="30" height="12" fill="#4a4a48" />
              <rect x="13" y="12" width="26" height="6" fill="#e89a5a" />
              <rect x="13" y="15" width="26" height="2" fill="#f6efe0" />
              <path d="M6 20h40v27H6z" fill="url(#gMetal)" stroke="#888" />
              <rect x="20" y="29" width="12" height="8" rx="1" fill="#f0f0f0" stroke="#555" strokeWidth="1.500" />
            </>)}
          </Tile>
          <Tile $bg="linear-gradient(#66bb58,#3f9a3c)">
            <PipLeft /><PipRight />
            {tileArt(<>
              <path d="M8 2h36v46H8z" fill="#0f7a22" />
              <path d="M11 5h24l7 7v33H11z" fill="#f4f5f2" />
              <path d="M35 5v7h7z" fill="#b9d9b0" />
              <rect x="14" y="21" width="22" height="19" fill="#d6ead0" stroke="#1c8a2c" />
              <path d="M14 26h22M14 30h22M14 35h22M21 21v19M28 21v19" stroke="#1c8a2c" />
              <rect x="27" y="31" width="14" height="14" fill="#f4f4f4" stroke="#777" />
              <rect x="29" y="37" width="3" height="6" fill="#2f84c4" />
              <rect x="33" y="33" width="3" height="10" fill="#e0651c" />
              <rect x="37" y="38" width="2" height="5" fill="#2f84c4" />
            </>)}
          </Tile>
          <Tile $last $bg="linear-gradient(#646a6b,#3e4445)">
            {tileArt(<>
              <path d="M9 9h34l-4 36c-3 3-23 3-26 0z" fill="#fff" opacity=".1" stroke="#cfd2d2" strokeOpacity=".5" />
              <ellipse cx="26" cy="9" rx="17" ry="3.500" fill="#555b5c" stroke="#c9cccc" strokeWidth="2.400" />
              <g fill="#eff0ef">
                <circle cx="19" cy="24" r="4" /><circle cx="27" cy="22" r="3.500" /><circle cx="34" cy="25" r="4" />
                <circle cx="23" cy="30" r="4.500" /><circle cx="31" cy="31" r="4.500" /><circle cx="17" cy="33" r="3.500" />
                <circle cx="20" cy="38" r="3.500" /><circle cx="27" cy="38" r="4" /><circle cx="34" cy="37" r="3.500" />
              </g>
              <path d="M20 26l5 3M30 24l-3 5M22 35l5-2M30 36l3-3" stroke="#bfc2c1" strokeWidth=".8" />
            </>)}
          </Tile>
        </Launcher>
        <Main>
          <Toolbar $h={39} $line><Flow items={row1} /></Toolbar>
          <Toolbar $h={39} $line><Flow items={row2} /></Toolbar>
          <Toolbar $h={35}><Flow items={row3} /></Toolbar>
          <SheetArea>
            <GridView><Sheet /></GridView>
            <VScroll>
              <SplitDash />
              <VBtn><span /></VBtn>
              <VThumb><GripLines /></VThumb>
              <VTrack />
              <VBtnDown><span /></VBtnDown>
            </VScroll>
            <LinkLine viewBox="0 0 1301 491">
              <line x1="262.500" y1="182" x2="429" y2="103" stroke="#3465a4" strokeWidth="3.500" />
            </LinkLine>
          </SheetArea>
          <TabBar>
            <NavGroup>
              <Nav d="M1 1h1v5H1zM6 1v5L2.500 3.500z" />
              <Nav d="M5 1v5L1.500 3.500z" />
              <Nav d="M2 1v5l3.500-2.500z" />
              <Nav d="M6 1H5v5h1zM1 1v5l3.500-2.500z" />
            </NavGroup>
            <SheetTab>Sheet1</SheetTab>
            <AddTab>
              <svg width="12" height="12" viewBox="0 0 12 12"><path d="M4 0h4v4h4v4H8v4H4V8H0V4h4z" fill="url(#gGreen)" stroke="#5c9620" /></svg>
            </AddTab>
            <TabFill />
            <TabSplit />
            <HScroll>
              <HBtn><span /></HBtn>
              <HThumb><HGrip /></HThumb>
              <HTrack />
              <HBtnRight><span /></HBtnRight>
            </HScroll>
            <HEnd><span /></HEnd>
          </TabBar>
          <DrawBar $h={39}><Flow items={row4} /></DrawBar>
          <StatusBar>
            <StatusCell $w={278} $pad={10} $edge>Sheet 1 / 1</StatusCell>
            <StatusCell $w={259} $pad={8} $edge>Default</StatusCell>
            <StatusCell $w={69} $edge />
            <StatusCell $w={29} $center $edge>
              <svg width="13" height="11" viewBox="0 0 13 11"><rect x="0" y="2" width="9" height="7" fill="#8a8a8a" /><path d="M10 1h3M11.500 1v9M10 10h3" stroke="#666" fill="none" /></svg>
            </StatusCell>
            <StatusCell $w={28} $center $edge>
              <svg width="14" height="15" viewBox="0 0 14 15">
                <path d="M1 .5h8l4 4v10H1z" fill="#eef" stroke="#7b68c8" />
                <path d="M6 5h6M6 8h6M6 11h6" stroke="#7b68c8" />
                <rect x="3" y="1" width="2.500" height="8" fill="#e01010" /><rect x="3" y="10.500" width="2.500" height="2.500" fill="#e01010" />
              </svg>
            </StatusCell>
            <StatusCell $w={29} $edge />
            <StatusCell $w={418} $center $edge $pad={3}>Sum=0</StatusCell>
            <StatusCell $w={142} $edge>
              <ZoomPart>
                <ZoomSign>−</ZoomSign>
                <ZoomTrack><ZoomKnob /></ZoomTrack>
                <ZoomSign>+</ZoomSign>
              </ZoomPart>
            </StatusCell>
            <StatusCell $pad={9}>100%</StatusCell>
          </StatusBar>
        </Main>
      </Body>
    </Page>
  );
}
